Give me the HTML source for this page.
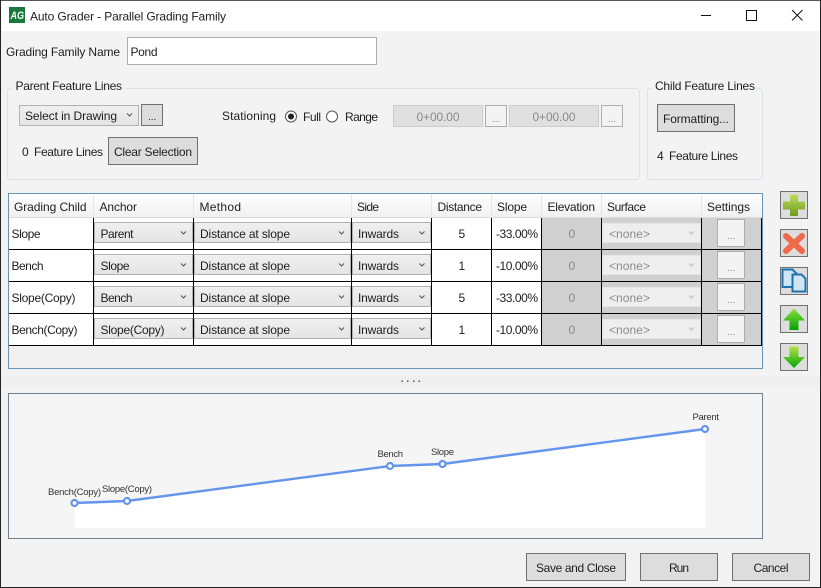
<!DOCTYPE html>
<html><head><meta charset="utf-8"><title>Auto Grader</title>
<style>
html,body{margin:0;padding:0;width:821px;height:588px;overflow:hidden;background:#f3f3f3}
svg{display:block}
text{font-family:"Liberation Sans",sans-serif;font-size:12px;fill:#1e1e1e}
.d{fill:#8a8a8a}
.s{font-size:9.5px;fill:#333}
.chev{fill:none;stroke:#555;stroke-width:1}
.chevd{fill:none;stroke:#bbb;stroke-width:1}
.btn{fill:#dddddd;stroke:#707070}
.bd{fill:#f3f3f3;stroke:#adadad}
.cb{fill:url(#cb);stroke:#b2b2b2}
.cbd{fill:#eeeeee;stroke:#e6e6e6}
.gl{stroke:#000;stroke-width:1}
</style></head><body>
<svg width="821" height="588" viewBox="0 0 821 588" xmlns="http://www.w3.org/2000/svg">
<defs>
<linearGradient id="cb" x1="0" y1="0" x2="0" y2="1"><stop offset="0" stop-color="#f0f0f0"/><stop offset="1" stop-color="#e4e4e4"/></linearGradient>
<linearGradient id="hd" x1="0" y1="0" x2="0" y2="1"><stop offset="0" stop-color="#ffffff"/><stop offset="1" stop-color="#f0f0f0"/></linearGradient>
<linearGradient id="pl" x1="0" y1="0" x2="0" y2="1"><stop offset="0" stop-color="#bcdc60"/><stop offset="1" stop-color="#6d9c1c"/></linearGradient>
<linearGradient id="up" x1="0" y1="0" x2="0" y2="1"><stop offset="0" stop-color="#8ce040"/><stop offset="1" stop-color="#00a400"/></linearGradient>
<linearGradient id="dn" x1="0" y1="0" x2="0" y2="1"><stop offset="0" stop-color="#b4e048"/><stop offset="1" stop-color="#00a800"/></linearGradient>
</defs>

<!-- window -->
<rect width="821" height="588" fill="#f3f3f3"/>
<rect x="1" y="1" width="819" height="30" fill="#fff"/>
<rect x="0" y="0" width="821" height="1" fill="#555"/>
<rect x="0" y="0" width="1" height="588" fill="#222"/>
<rect x="820" y="0" width="1" height="588" fill="#222"/>
<rect x="0" y="587" width="821" height="1" fill="#222"/>

<!-- title bar -->
<rect x="9" y="7" width="16" height="16" fill="#17793c"/>
<text x="10.5" y="19" textLength="13.5" lengthAdjust="spacingAndGlyphs" style="font-size:11px;font-weight:bold;font-style:italic;fill:#fff">AG</text>
<text x="30" y="20.5" textLength="196">Auto Grader - Parallel Grading Family</text>
<rect x="701" y="15" width="10" height="1" fill="#111"/>
<rect x="746.5" y="10.5" width="10" height="10" fill="none" stroke="#111"/>
<path d="M792 10L802.5 20.5M802.5 10L792 20.5" stroke="#111" fill="none"/>

<!-- name -->
<text x="6" y="56" textLength="114">Grading Family Name</text>
<rect x="127.5" y="37.5" width="249" height="27" fill="#fff" stroke="#ababab"/>
<text x="130.5" y="56" textLength="27">Pond</text>

<!-- parent group -->
<rect x="7.5" y="88.5" width="632" height="91" rx="3" fill="none" stroke="#dbe3e8"/>
<rect x="12" y="84" width="114" height="8" fill="#f3f3f3"/>
<text x="15.5" y="90" textLength="106.5">Parent Feature Lines</text>
<rect x="19.5" y="105.5" width="119" height="20" class="cb"/>
<text x="25" y="120" textLength="92">Select in Drawing</text>
<path d="M127 113.5l2.5 2.5 2.5-2.5" class="chev"/>
<rect x="141.5" y="104.5" width="21" height="21" class="btn"/>
<text x="148" y="120" style="font-size:10px">...</text>
<text x="222" y="120" textLength="54">Stationing</text>
<circle cx="291" cy="116.5" r="5.5" fill="#fff" stroke="#555"/>
<circle cx="291" cy="116.5" r="3" fill="#222"/>
<text x="303" y="121" textLength="18">Full</text>
<circle cx="332" cy="116.5" r="5.5" fill="#fff" stroke="#555"/>
<text x="345" y="121" textLength="33">Range</text>
<rect x="393.5" y="105.5" width="89" height="21" fill="#e0e0e0" stroke="#cccccc"/>
<text x="416.5" y="121" textLength="43" class="d">0+00.00</text>
<rect x="485.5" y="105.5" width="21" height="21" class="bd"/>
<text x="492" y="122" class="d" style="font-size:10px">...</text>
<rect x="509.5" y="105.5" width="89" height="21" fill="#e0e0e0" stroke="#cccccc"/>
<text x="532.5" y="121" textLength="43" class="d">0+00.00</text>
<rect x="601.5" y="105.5" width="21" height="21" class="bd"/>
<text x="608" y="122" class="d" style="font-size:10px">...</text>
<text x="22" y="156">0</text>
<text x="34" y="156" textLength="69">Feature Lines</text>
<rect x="108.5" y="137.5" width="89" height="27" class="btn"/>
<text x="114" y="156" textLength="78">Clear Selection</text>

<!-- child group -->
<rect x="647.5" y="88.5" width="115" height="91" rx="3" fill="none" stroke="#dbe3e8"/>
<rect x="653" y="84" width="104" height="8" fill="#f3f3f3"/>
<text x="655" y="90" textLength="100">Child Feature Lines</text>
<rect x="657.5" y="104.5" width="77" height="27" class="btn"/>
<text x="663" y="123" textLength="66">Formatting...</text>
<text x="657" y="160">4</text>
<text x="669" y="160" textLength="69">Feature Lines</text>

<!-- grid -->
<rect x="8.5" y="193.5" width="754" height="175" fill="#f0f0f0" stroke="#6a93b8"/>
<rect x="9" y="194" width="753" height="24" fill="url(#hd)"/>
<rect x="9" y="218" width="753" height="128" fill="#fff"/>
<rect x="542" y="218" width="219" height="128" fill="#d0d0d0"/>
<path d="M93.5 194V218M193.5 194V218M351.5 194V218M431.5 194V218M491.5 194V218M541.5 194V218M601.5 194V218M701.5 194V218" stroke="#e6e6e6"/>
<rect x="9" y="217" width="753" height="1" fill="#dcdcdc"/>
<text x="14" y="211" textLength="72.5">Grading Child</text>
<text x="99.5" y="211" textLength="37.5">Anchor</text>
<text x="199.5" y="211" textLength="41.5">Method</text>
<text x="357" y="211" textLength="22">Side</text>
<text x="437.5" y="211" textLength="44.5">Distance</text>
<text x="497" y="211" textLength="30">Slope</text>
<text x="547.5" y="211" textLength="47.5">Elevation</text>
<text x="607" y="211" textLength="39">Surface</text>
<text x="707" y="211" textLength="43">Settings</text>

<!-- row 1 -->
<rect x="94.5" y="222.5" width="98" height="20" class="cb"/>
<rect x="194.5" y="222.5" width="156" height="20" class="cb"/>
<rect x="352.5" y="222.5" width="78" height="20" class="cb"/>
<rect x="602.5" y="223.5" width="98" height="19" class="cbd"/>
<rect x="717.5" y="219.5" width="27" height="27" class="bd"/>
<path d="M181 231.5l2.5 2.5 2.5-2.5M339 231.5l2.5 2.5 2.5-2.5M419.5 231.5l2.5 2.5 2.5-2.5" class="chev"/>
<path d="M689 231.5l2.5 2.5 2.5-2.5" class="chevd"/>
<text x="11.5" y="238" textLength="29">Slope</text>
<text x="100.5" y="238" textLength="33">Parent</text>
<text x="200" y="238" textLength="90">Distance at slope</text>
<text x="358" y="238" textLength="41">Inwards</text>
<text x="458.5" y="238">5</text>
<text x="496" y="238" textLength="42">-33.00%</text>
<text x="568.5" y="238" class="d">0</text>
<text x="609" y="238" textLength="41" class="d">&lt;none&gt;</text>
<text x="727" y="239" class="d" style="font-size:10px">...</text>

<!-- row 2 -->
<rect x="94.5" y="254.5" width="98" height="20" class="cb"/>
<rect x="194.5" y="254.5" width="156" height="20" class="cb"/>
<rect x="352.5" y="254.5" width="78" height="20" class="cb"/>
<rect x="602.5" y="255.5" width="98" height="19" class="cbd"/>
<rect x="717.5" y="251.5" width="27" height="27" class="bd"/>
<path d="M181 263.5l2.5 2.5 2.5-2.5M339 263.5l2.5 2.5 2.5-2.5M419.5 263.5l2.5 2.5 2.5-2.5" class="chev"/>
<path d="M689 263.5l2.5 2.5 2.5-2.5" class="chevd"/>
<text x="11.5" y="270" textLength="32">Bench</text>
<text x="100.5" y="270" textLength="29">Slope</text>
<text x="200" y="270" textLength="90">Distance at slope</text>
<text x="358" y="270" textLength="41">Inwards</text>
<text x="458.5" y="270">1</text>
<text x="496" y="270" textLength="42">-10.00%</text>
<text x="568.5" y="270" class="d">0</text>
<text x="609" y="270" textLength="41" class="d">&lt;none&gt;</text>
<text x="727" y="271" class="d" style="font-size:10px">...</text>

<!-- row 3 -->
<rect x="94.5" y="286.5" width="98" height="20" class="cb"/>
<rect x="194.5" y="286.5" width="156" height="20" class="cb"/>
<rect x="352.5" y="286.5" width="78" height="20" class="cb"/>
<rect x="602.5" y="287.5" width="98" height="19" class="cbd"/>
<rect x="717.5" y="283.5" width="27" height="27" class="bd"/>
<path d="M181 295.5l2.5 2.5 2.5-2.5M339 295.5l2.5 2.5 2.5-2.5M419.5 295.5l2.5 2.5 2.5-2.5" class="chev"/>
<path d="M689 295.5l2.5 2.5 2.5-2.5" class="chevd"/>
<text x="11.5" y="302" textLength="64">Slope(Copy)</text>
<text x="100.5" y="302" textLength="32">Bench</text>
<text x="200" y="302" textLength="90">Distance at slope</text>
<text x="358" y="302" textLength="41">Inwards</text>
<text x="458.5" y="302">5</text>
<text x="496" y="302" textLength="42">-33.00%</text>
<text x="568.5" y="302" class="d">0</text>
<text x="609" y="302" textLength="41" class="d">&lt;none&gt;</text>
<text x="727" y="303" class="d" style="font-size:10px">...</text>

<!-- row 4 -->
<rect x="94.5" y="318.5" width="98" height="20" class="cb"/>
<rect x="194.5" y="318.5" width="156" height="20" class="cb"/>
<rect x="352.5" y="318.5" width="78" height="20" class="cb"/>
<rect x="602.5" y="319.5" width="98" height="19" class="cbd"/>
<rect x="717.5" y="315.5" width="27" height="27" class="bd"/>
<path d="M181 327.5l2.5 2.5 2.5-2.5M339 327.5l2.5 2.5 2.5-2.5M419.5 327.5l2.5 2.5 2.5-2.5" class="chev"/>
<path d="M689 327.5l2.5 2.5 2.5-2.5" class="chevd"/>
<text x="11.5" y="334" textLength="66">Bench(Copy)</text>
<text x="100.5" y="334" textLength="64">Slope(Copy)</text>
<text x="200" y="334" textLength="90">Distance at slope</text>
<text x="358" y="334" textLength="41">Inwards</text>
<text x="458.5" y="334">1</text>
<text x="496" y="334" textLength="42">-10.00%</text>
<text x="568.5" y="334" class="d">0</text>
<text x="609" y="334" textLength="41" class="d">&lt;none&gt;</text>
<text x="727" y="335" class="d" style="font-size:10px">...</text>

<!-- grid lines -->
<path class="gl" d="M9 249.5H762M9 281.5H762M9 313.5H762M9 345.5H762"/>
<path class="gl" d="M93.5 218V346M193.5 218V346M351.5 218V346M431.5 218V346M491.5 218V346M541.5 218V346M601.5 218V346M701.5 218V346M761.5 218V346"/>

<!-- side buttons -->
<rect x="780.5" y="191.5" width="27" height="27" class="btn"/>
<path d="M790 194.5h8v7h7v8h-7v6.500h-8v-6.500h-7v-8h7z" fill="url(#pl)"/>
<rect x="780.5" y="229.5" width="27" height="27" class="btn"/>
<path d="M786 236L802 251M802 236L786 251" stroke="#f0694a" stroke-width="6" stroke-linecap="round" fill="none"/>
<rect x="780.5" y="267.5" width="27" height="27" class="btn"/>
<path d="M782.500 269.500h10l4 4v13.500h-14z" fill="#cfe5f4" stroke="#1f72b0" stroke-width="2"/>
<path d="M792.500 274.500h9l4 4v13h-13z" fill="#cfe5f4" stroke="#1f72b0" stroke-width="2"/>
<rect x="780.5" y="305.5" width="27" height="27" class="btn"/>
<path d="M794 308.500L805 320.500H798.500V330H789.500V320.500H783z" fill="url(#up)"/>
<rect x="780.5" y="343.5" width="27" height="27" class="btn"/>
<path d="M789.500 346.500H798.500V357H805L794 368L783 357H789.500z" fill="url(#dn)"/>

<!-- splitter -->
<rect x="1" y="376" width="819" height="10" fill="#efefef"/>
<rect x="401.5" y="380.5" width="1.5" height="1.5" fill="#556"/>
<rect x="407" y="380.5" width="1.5" height="1.5" fill="#556"/>
<rect x="413" y="380.5" width="1.5" height="1.5" fill="#556"/>
<rect x="418.5" y="380.5" width="1.5" height="1.5" fill="#556"/>

<!-- preview -->
<rect x="8.5" y="393.5" width="754" height="145" fill="#f5f5f5" stroke="#708090"/>
<path d="M74.500 503L127 501L390 466L442.500 464L705.500 429V528H74.500Z" fill="#fff"/>
<path d="M74.500 503L127 501L390 466L442.500 464L705 429" fill="none" stroke="#6495ed" stroke-width="2.4"/>
<g fill="#fff" stroke="#6495ed" stroke-width="2.2">
<circle cx="74.500" cy="503" r="3"/>
<circle cx="127" cy="501" r="3"/>
<circle cx="390" cy="466" r="3"/>
<circle cx="442.500" cy="464" r="3"/>
<circle cx="705" cy="429" r="3"/>
</g>
<text x="48" y="495" textLength="53" class="s">Bench(Copy)</text>
<text x="102" y="492" textLength="50" class="s">Slope(Copy)</text>
<text x="377.5" y="457" textLength="25.5" class="s">Bench</text>
<text x="431" y="455" textLength="23" class="s">Slope</text>
<text x="692.5" y="420" textLength="26.5" class="s">Parent</text>

<!-- bottom buttons -->
<rect x="526.5" y="553.5" width="99" height="27" class="btn"/>
<text x="536" y="572" textLength="80">Save and Close</text>
<rect x="640.5" y="553.5" width="77" height="27" class="btn"/>
<text x="669" y="572" textLength="20">Run</text>
<rect x="732.5" y="553.5" width="77" height="27" class="btn"/>
<text x="753.5" y="572" textLength="35">Cancel</text>
</svg>
</body></html>
